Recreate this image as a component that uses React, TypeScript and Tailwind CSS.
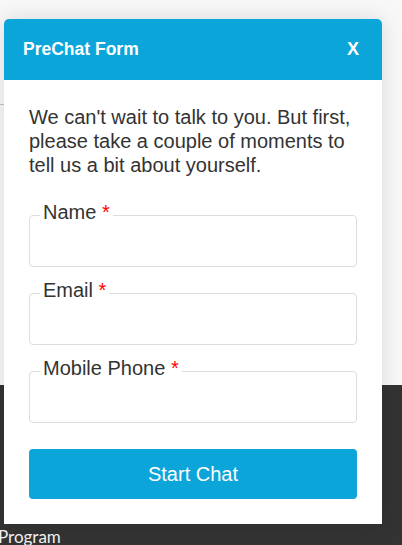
const fields = ["Name", "Email", "Mobile Phone"];

export default function App() {
  return (
    <div className="relative h-[545px] overflow-hidden bg-[#f8f8f8] font-['Liberation_Sans',Arial,sans-serif]">
      <div className="flex h-full flex-col">
        <div className="h-[385px] shrink-0 bg-[#f8f8f8]">
          <div className="h-[105px] w-[200px] border-b border-[#c4c4c4]" />
        </div>
        <div className="flex-1 overflow-hidden bg-[#333333] pt-[142px]">
          <span className="-ml-[2px] block font-['Lato',sans-serif] text-[17px] leading-[20px] text-[#f2f2f2]">
            Program
          </span>
        </div>
      </div>

      {/* chat window lies over the page */}
      <div className="absolute left-[4px] top-[19px] w-[378px] overflow-hidden rounded-t-[5px] bg-white shadow-[0_0_22px_rgba(0,0,0,0.13)]">
        <div className="flex h-[61px] items-center justify-between bg-[#0ba5da] pl-[19px] pr-[23px] text-white">
          <span className="text-[17.5px] font-bold">PreChat Form</span>
          <span className="text-[18px] font-bold">X</span>
        </div>

        <div className="p-[25px]">
          <p className="text-[20px] leading-[24px] text-[#333]">
            We can't wait to talk to you. But first, please take a couple of moments to tell us a bit about yourself.
          </p>

          <div className="mt-[24px] flex flex-col gap-[12px]">
            {fields.map((f) => (
              <fieldset key={f} className="rounded-[4px] border border-[#dddddd] pl-[10px] pr-[10px]">
                <legend className="px-[3px] pb-[5px] text-[20px] leading-[23px] text-[#333]">
                  {f} <span className="text-[#ff0000]">*</span>
                </legend>
                <input className="block h-[37px] w-full bg-transparent outline-none" aria-label={f} />
              </fieldset>
            ))}
          </div>

          <button className="mt-[26px] block h-[50px] w-full rounded-[4px] bg-[#0ba5da] text-[20px] text-white">
            Start Chat
          </button>
        </div>
      </div>
    </div>
  );
}
